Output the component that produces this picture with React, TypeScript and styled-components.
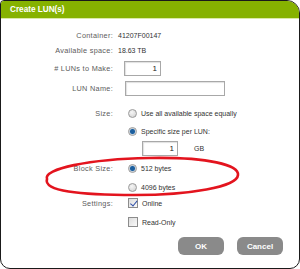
import React from 'react';
import styled, { createGlobalStyle } from 'styled-components';

const App: React.FC = () => {
    return (
        <>
            <GlobalStyle/>
            <Dialog>
                <Header>Create LUN(s)</Header>
                <Body>
                    <Row $top={9}>
                        <Label>Container:</Label>
                        <Value>41207F00147</Value>
                    </Row>
                    <Row $top={1}>
                        <Label>Available space:</Label>
                        <Value>18.63 TB</Value>
                    </Row>
                    <Row $top={4}>
                        <Label># LUNs to Make:</Label>
                        <Field $width={37} defaultValue="1"/>
                    </Row>
                    <Row $top={6}>
                        <Label>LUN Name:</Label>
                        <Field $width={100} $offset={1}/>
                    </Row>
                    <Row $top={11}>
                        <Label>Size:</Label>
                        <Choice><Radio/>Use all available space equally</Choice>
                    </Row>
                    <Row $top={4}>
                        <Label/>
                        <Choice><Radio $checked/>Specific size per LUN:</Choice>
                    </Row>
                    <Row $top={3}>
                        <Label/>
                        <Field $width={36} $offset={18} defaultValue="1"/>
                        <Unit>GB</Unit>
                    </Row>
                    <Row $top={6}>
                        <Label>Block Size:</Label>
                        <Choice><Radio $checked/>512 bytes</Choice>
                    </Row>
                    <Row $top={5}>
                        <Label/>
                        <Choice><Radio/>4096 bytes</Choice>
                    </Row>
                    <Row $top={2}>
                        <Label>Settings:</Label>
                        <Choice><Check $checked/>Online</Choice>
                    </Row>
                    <Row $top={5}>
                        <Label/>
                        <Choice><Check/>Read-Only</Choice>
                    </Row>
                    <Buttons>
                        <Button>OK</Button>
                        <Button>Cancel</Button>
                    </Buttons>
                </Body>
                <Circle width="206" height="46" viewBox="0 0 206 46">
                    <path
                        d="M8 24 C 4 14, 50 4, 110 3 C 170 2, 200 10, 199 20 C 198 32, 150 40, 96 40 C 40 40, 4 36, 8 24 Z"
                        fill="none"
                        stroke="#e3141e"
                        strokeWidth="2.6"
                    />
                </Circle>
            </Dialog>
        </>
    );
};

export default App;

const GlobalStyle = createGlobalStyle`
  body {
    margin: 0;
    background: #fff;
    font-family: "Liberation Sans", Arial, sans-serif;
  }
`;

const Dialog = styled.div`
  position: relative;
  width: 300px;
  height: 269px;
  box-sizing: border-box;
  border: 1.5px solid #1a1a1a;
  border-radius: 4px 13px 10px 10px;
  overflow: hidden;
  background: #fff;
`;

const Header = styled.div`
  height: 17px;
  line-height: 17px;
  padding-left: 9px;
  background: #86b200;
  border-bottom: 1px solid #dbe9a8;
  color: #fff;
  font-size: 8.2px;
  font-weight: bold;
`;

const Body = styled.div`
  display: flex;
  flex-direction: column;
`;

const Row = styled.div<{ $top: number }>`
  display: flex;
  align-items: center;
  height: 14px;
  margin-top: ${p => p.$top}px;
`;

const Label = styled.div`
  width: 117px;
  flex-shrink: 0;
  text-align: right;
  padding-right: 5px;
  box-sizing: border-box;
  color: #5c5c5c;
  font-size: 7.3px;
  letter-spacing: 0.3px;
`;

const Value = styled.div`
  color: #333;
  font-size: 7px;
`;

const Field = styled.input<{ $width: number, $offset?: number }>`
  width: ${p => p.$width}px;
  height: 15px;
  margin-left: ${p => (p.$offset || 0) + 6}px;
  box-sizing: border-box;
  border: 1px solid #a8a8a8;
  box-shadow: inset 1px 1px 1px #e0e0e0;
  padding: 0 3px;
  text-align: right;
  font-family: inherit;
  font-size: 8px;
  color: #222;
  background: #fff;
`;

const Unit = styled.span`
  margin-left: 16px;
  color: #333;
  font-size: 7px;
`;

const Choice = styled.label`
  display: flex;
  align-items: center;
  gap: 4px;
  margin-left: 10px;
  color: #333;
  font-size: 7px;
`;

const Radio = styled.span<{ $checked?: boolean }>`
  width: 9px;
  height: 9px;
  border-radius: 50%;
  box-sizing: border-box;
  border: 1px solid #9a9a9a;
  background: ${p => p.$checked
    ? 'radial-gradient(circle, #1c5f9e 0 2px, #6c9cc8 2.6px, #e4e4e4 3.2px)'
    : 'radial-gradient(circle at 40% 35%, #f6f6f6, #cfcfcf)'};
`;

const Check = styled.span<{ $checked?: boolean }>`
  position: relative;
  width: 10px;
  height: 10px;
  box-sizing: border-box;
  border: 1px solid #8c8c8c;
  background: linear-gradient(135deg, #dcdcdc, #fafafa);
  &::after {
    content: '';
    display: ${p => p.$checked ? 'block' : 'none'};
    position: absolute;
    left: 2.5px;
    top: 0px;
    width: 2.5px;
    height: 5.5px;
    border: solid #2f4fa8;
    border-width: 0 1.6px 1.6px 0;
    transform: rotate(40deg);
  }
`;

const Buttons = styled.div`
  display: flex;
  justify-content: flex-end;
  gap: 13px;
  margin-top: 8px;
  padding-right: 16px;
`;

const Button = styled.button`
  width: 46px;
  height: 18px;
  border: none;
  border-radius: 6px;
  background: #8a8a8a;
  color: #fff;
  font-family: inherit;
  font-size: 8px;
  font-weight: bold;
  padding: 0;
`;

const Circle = styled.svg`
  position: absolute;
  left: 38px;
  top: 154px;
`;
